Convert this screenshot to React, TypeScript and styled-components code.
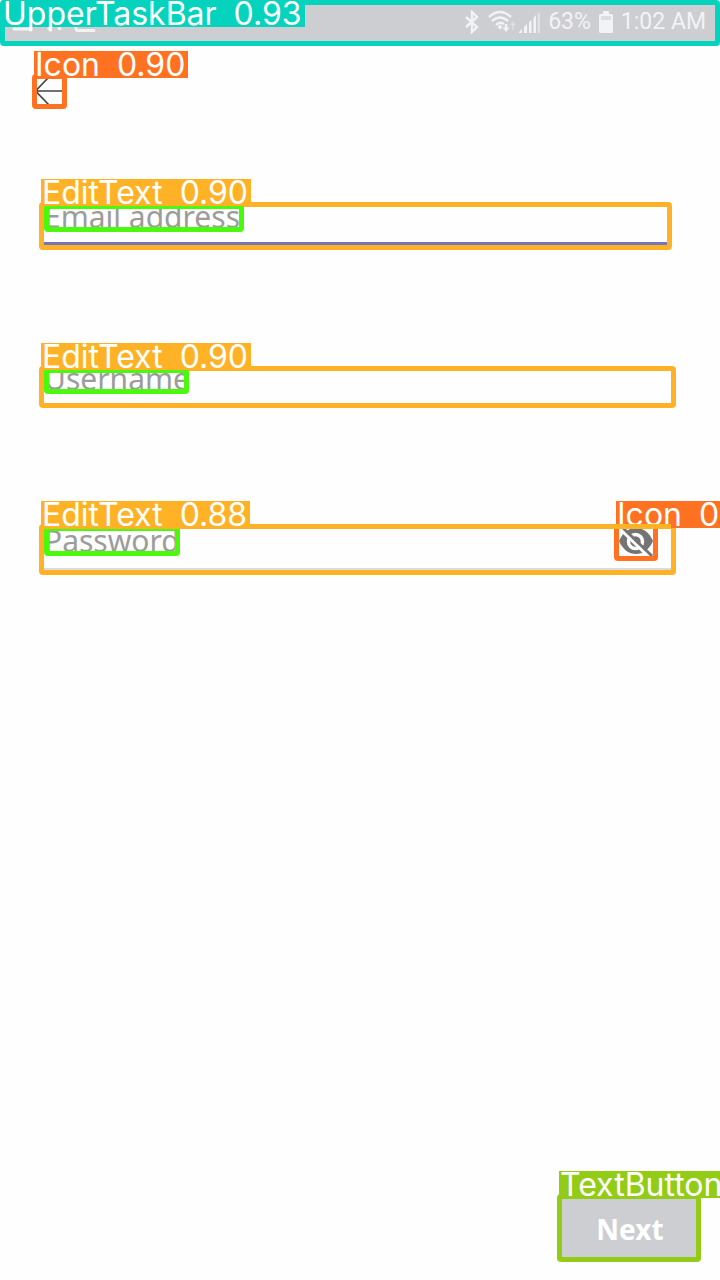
import React from 'react';
import styled, { createGlobalStyle } from 'styled-components';

const GlobalStyle = createGlobalStyle`
  * { box-sizing: border-box; }
  body { margin: 0; background: #fefefe; }
`;

const Page = styled.div`
  display: flex;
  flex-direction: column;
  min-height: 100vh;
  overflow-x: clip;
  font-family: 'Noto Sans', 'Open Sans', sans-serif;
`;

const Region = styled.div<{ $color: string }>`
  position: relative;
  border: 5px solid ${(p) => p.$color};
  border-radius: 4px;
`;

const Tag = styled.span<{ $color: string; $inside?: boolean; $bleed?: number }>`
  position: absolute;
  z-index: 3;
  display: flex;
  gap: 17px;
  height: 27px;
  padding: 0 3px 0 1px;
  top: ${(p) => (p.$inside ? '-5px' : '-28px')};
  left: -3px;
  ${(p) => (p.$bleed ? `right: -${p.$bleed}px;` : '')}
  background: ${(p) => p.$color};
  color: #fff;
  font: 32px/27px Inter, sans-serif;
  white-space: nowrap;
`;

const StatusRegion = styled(Region)`
  height: 46px;
  background: #cdced2;
`;

const StatusBar = styled.header`
  display: flex;
  align-items: center;
  justify-content: space-between;
  height: 34px;
  padding: 0 9px 0 7px;
  color: #f3f3f5;
  font: 23px/34px Roboto, sans-serif;
`;

const StatusGroup = styled.div<{ $gap: number }>`
  display: flex;
  align-items: center;
  gap: ${(p) => p.$gap}px;
`;

const BackRow = styled.nav`
  display: flex;
  padding: 28px 32px 0;
`;

const IconRegion = styled(Region)`
  width: 35px;
  height: 35px;
`;

const IconButton = styled.button`
  display: block;
  width: 100%;
  height: 100%;
  padding: 0;
  border: 0;
  background: transparent;
  svg { display: block; }
`;

const Form = styled.form`
  display: flex;
  flex: 1;
  flex-direction: column;
  gap: 116px;
  padding: 93px 19px 18px 39px;
`;

const FieldRegion = styled(Region)<{ $height: number; $inset: number }>`
  display: flex;
  height: ${(p) => p.$height}px;
  margin-right: ${(p) => p.$inset}px;
`;

const TextField = styled.input<{ $line: string }>`
  flex: 1;
  min-width: 0;
  padding: 0 0 17px;
  border: 0;
  border-bottom: ${(p) => p.$line};
  outline: 0;
  background: transparent;
  color: #333;
  font: 30px/30px 'Noto Sans', sans-serif;
  &::placeholder { color: #9c9c9c; opacity: 1; }
`;

const TextMark = styled.span<{ $width: number; $bottom: number }>`
  position: absolute;
  z-index: 2;
  top: -3px;
  left: 0;
  bottom: ${(p) => p.$bottom}px;
  width: ${(p) => p.$width}px;
  border: 5px solid #4bf90c;
  border-radius: 4px;
  pointer-events: none;
`;

const RevealRegion = styled(Region)`
  position: absolute;
  z-index: 1;
  top: -5px;
  right: 13px;
  width: 44px;
  height: 37px;
`;

const FieldTopEdge = styled.span`
  position: absolute;
  z-index: 2;
  top: -5px;
  right: 0;
  left: 0;
  height: 5px;
  background: #ffb225;
`;

const SubmitRegion = styled(Region)`
  align-self: flex-end;
  width: 144px;
  height: 68px;
  margin-top: auto;
`;

const SubmitButton = styled.button`
  width: 100%;
  height: 100%;
  padding: 2px 0 0 2px;
  border: 0;
  background: #cdced2;
  color: #fff;
  font: bold 28px/56px 'Noto Sans', sans-serif;
`;

const ORANGE = '#ff7221';
const AMBER = '#ffb225';
const TEAL = '#05d3bd';
const LIME = '#92cc17';

type DetectionTagProps = {
  color: string;
  name: string;
  score?: string;
  inside?: boolean;
  bleed?: number;
};

function DetectionTag({ color, name, score, inside, bleed }: DetectionTagProps) {
  return (
    <Tag $color={color} $inside={inside} $bleed={bleed}>
      <span>{name}</span>
      {score && <span>{score}</span>}
    </Tag>
  );
}

type FieldProps = {
  label: string;
  type: string;
  score: string;
  height: number;
  inset: number;
  line: string;
  markWidth: number;
  markBottom: number;
  children?: React.ReactNode;
};

function Field(p: FieldProps) {
  return (
    <FieldRegion $color={AMBER} $height={p.height} $inset={p.inset}>
      <TextField type={p.type} placeholder={p.label} aria-label={p.label} $line={p.line} />
      <TextMark $width={p.markWidth} $bottom={p.markBottom} />
      {p.children}
      <DetectionTag color={AMBER} name="EditText" score={p.score} />
    </FieldRegion>
  );
}

const BluetoothIcon = () => (
  <svg width="16" height="24" viewBox="0 0 16 24" fill="none" stroke="currentColor" strokeWidth="2.4">
    <path d="M2 7 13 17 8 22V2l5 5L2 17" />
  </svg>
);

const WifiIcon = () => (
  <svg width="28" height="24" viewBox="0 0 28 24" fill="none" stroke="currentColor" strokeWidth="2.4">
    <path d="M1 7Q12 -3 23 7M4 11Q12 4 20 11M8 15Q12 11 16 14" />
    <circle cx="12" cy="17" r="2" fill="currentColor" stroke="none" />
    <path d="M18 14v5" />
    <path d="m14.500 17.500 3.500 4.500 3.500-4.500z" fill="currentColor" stroke="none" />
    <path d="M25 20v-6" opacity=".4" strokeWidth="2" />
    <path d="m22 15 3-4 3 4z" fill="currentColor" stroke="none" opacity=".4" />
  </svg>
);

const SignalIcon = () => (
  <svg width="21" height="22" viewBox="0 0 21 22" fill="currentColor">
    <path d="M0 22v-1l3-3v4zM5 22v-6l3-3v9zM10 22V11l2.500-2v13zM14.500 22V7l2.500-3v18z" />
    <path d="M18.500 22V3L21 1v21z" opacity=".5" />
  </svg>
);

const BatteryIcon = () => (
  <svg width="14" height="22" viewBox="0 0 14 22">
    <path d="M1 3h3V0h6v3h3l1 1v17l-1 1H1l-1-1V4z" fill="#f3f3f5" />
    <path d="M2 5h10v4H2z" fill="#dcdde0" />
  </svg>
);

const NotificationIcons = () => (
  <svg width="84" height="24" viewBox="0 0 84 24" fill="none" stroke="currentColor" strokeWidth="3" strokeLinecap="round">
    <path d="M2 19h17M37 18.500h1M47 18.500h1M64 16v2q0 2.500 2 2.500h16" />
  </svg>
);

const BackArrow = () => (
  <svg width="25" height="25" viewBox="0 0 25 25" fill="none" stroke="#434343" strokeWidth="1.600">
    <path d="M0 12h25M11-1 0 10.500v3L12 26" />
  </svg>
);

const HiddenEye = () => (
  <svg width="34" height="27" viewBox="0 0 34 27">
    <path d="M0 12C4 3 10-1 17-1s13 4 17 13c-4 9-10 13-17 13S4 21 0 12z" fill="#747474" />
    <circle cx="16.500" cy="12.500" r="7" fill="none" stroke="#fefefe" strokeWidth="3.500" />
    <path d="m1 0 30 29" stroke="#fefefe" strokeWidth="3" />
    <path d="m3-2 30 29" stroke="#747474" strokeWidth="2.800" />
  </svg>
);

export default function App() {
  return (
    <Page>
      <GlobalStyle />
      <StatusRegion $color={TEAL}>
        <StatusBar>
          <NotificationIcons />
          <StatusGroup $gap={8}>
            <BluetoothIcon />
            <StatusGroup $gap={3}>
              <WifiIcon />
              <SignalIcon />
            </StatusGroup>
            <span>63%</span>
            <BatteryIcon />
            <span>1:02 AM</span>
          </StatusGroup>
        </StatusBar>
        <DetectionTag color={TEAL} name="UpperTaskBar" score="0.93" inside />
      </StatusRegion>

      <BackRow>
        <IconRegion $color={ORANGE}>
          <IconButton type="button" aria-label="Back">
            <BackArrow />
          </IconButton>
          <DetectionTag color={ORANGE} name="Icon" score="0.90" />
        </IconRegion>
      </BackRow>

      <Form>
        <Field label="Email address" type="email" score="0.90" height={48} inset={29}
          line="3px solid #7476bd" markWidth={200} markBottom={13} />
        <Field label="Username" type="text" score="0.90" height={42} inset={25}
          line="0" markWidth={145} markBottom={9} />
        <Field label="Password" type="password" score="0.88" height={51} inset={25}
          line="2px solid #dcdcdc" markWidth={136} markBottom={14}>
          <RevealRegion $color={ORANGE}>
            <IconButton type="button" aria-label="Show password">
              <HiddenEye />
            </IconButton>
            <DetectionTag color={ORANGE} name="Icon" score="0." bleed={67} />
          </RevealRegion>
          <FieldTopEdge />
        </Field>
        <SubmitRegion $color={LIME}>
          <SubmitButton type="submit">Next</SubmitButton>
          <DetectionTag color={LIME} name="TextButton" bleed={24} />
        </SubmitRegion>
      </Form>
    </Page>
  );
}
